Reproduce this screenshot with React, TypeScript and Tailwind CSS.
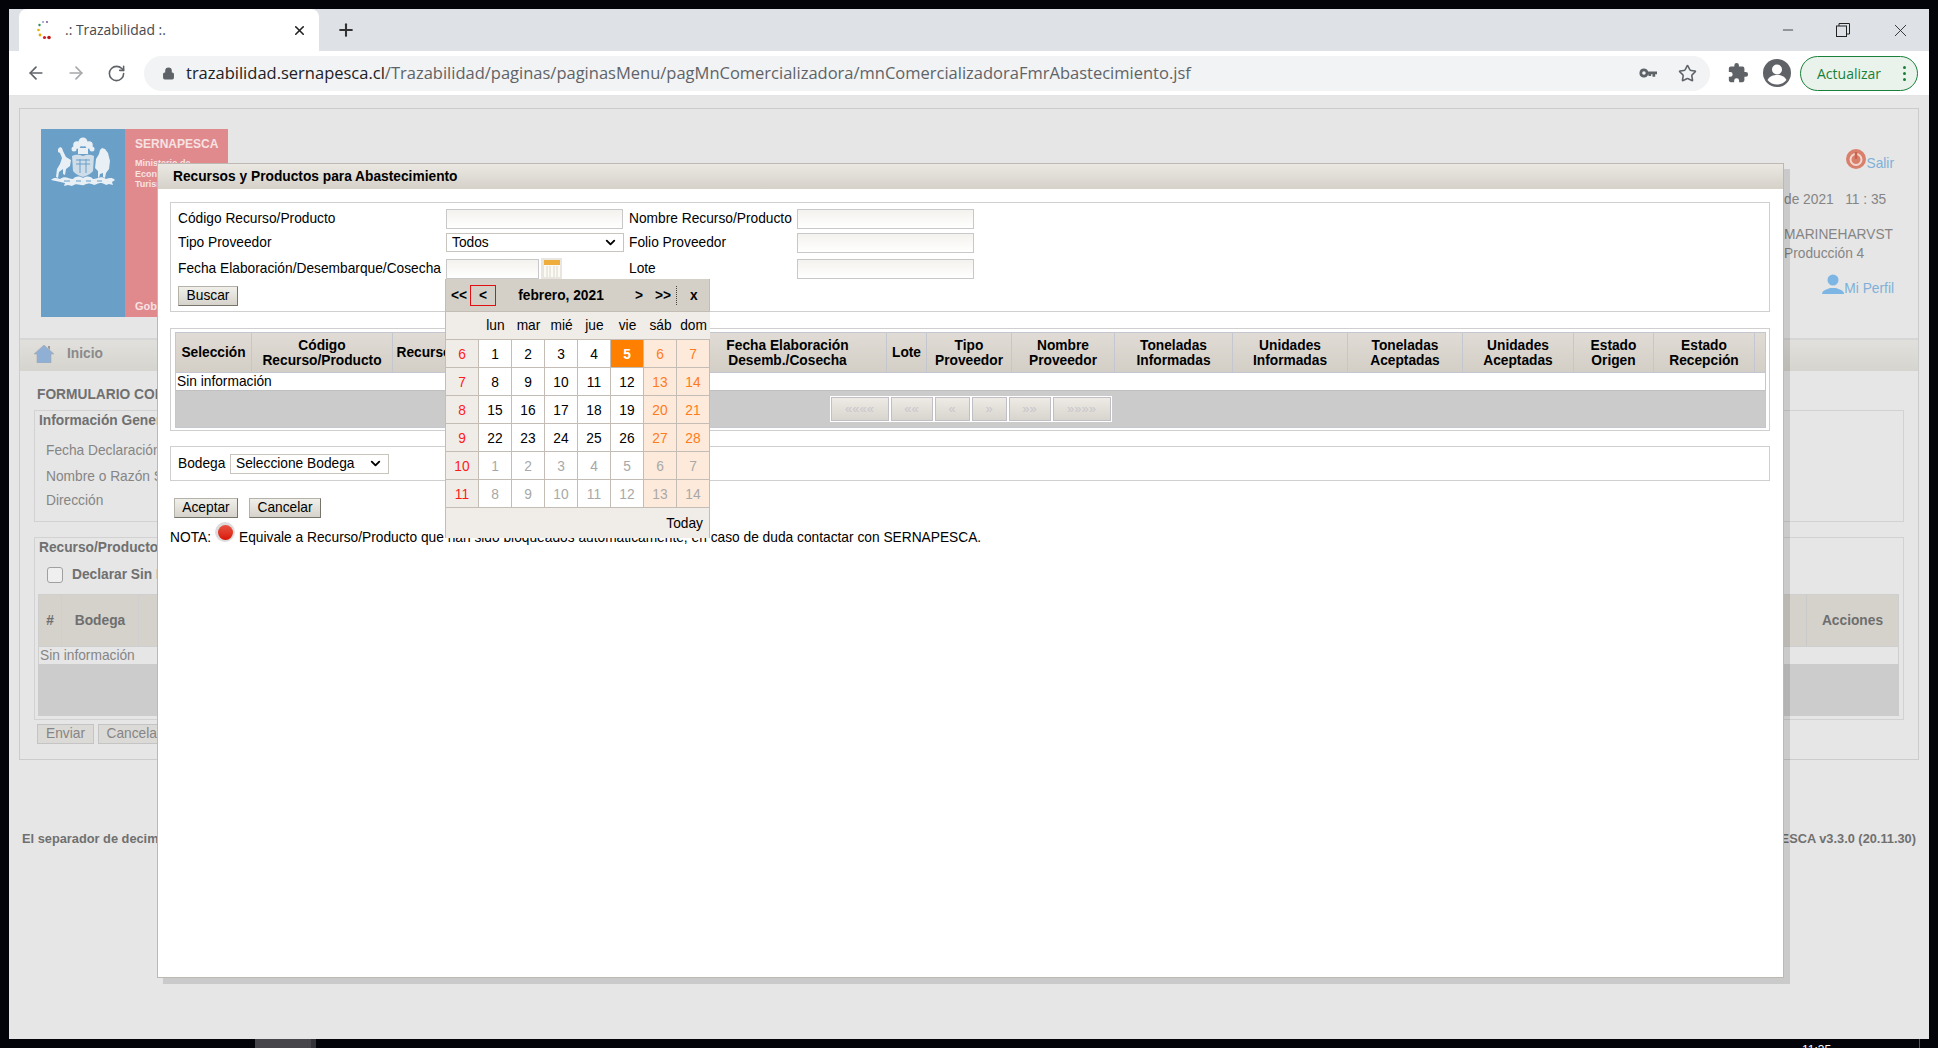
import React from 'react';
import { ArrowLeft, ArrowRight, RotateCw, Lock, Star, Minus, X, Plus, ChevronDown } from 'lucide-react';

const Emblem = () => (
  <svg viewBox="0 0 66 50" className="h-[50px] w-[66px]" fill="#e8eff5">
    <circle cx="33" cy="5" r="4.500" />
    <circle cx="27" cy="8" r="3.800" />
    <circle cx="39" cy="8" r="3.800" />
    <circle cx="24" cy="12" r="2.500" />
    <circle cx="42" cy="12" r="2.500" />
    <path d="M28 11h10v6H28z" />
    <path d="M22 19c4-2 8-1 11 0 3-1 7-2 11 0l-1 15c-2 3-7 5-10 6-3-1-8-3-10-6z" fill="#cfdde9" />
    <path d="M26 23h14M26 27h14M30 22v14M36 22v14" stroke="#6a9fc7" strokeWidth="1" fill="none" />
    <path d="M8 12l2-2 2 1 1 3 3 6 5 3-1 6-4 3-1 6-2-1v-5l-4 3-1 6-2-1 1-8 3-5 2-6-2-5-2-1z" />
    <path d="M52 11l3 1 3 4 2 8-1 8-3 4-1 5-2-1v-4l-3 1-1 4-1-1v-6l-3-3 1-9 3-5 1-4z" />
    <path d="M1 43c3-3 6-2 9-1 5-4 9 0 13 0 3-3 6-3 10-1 4-2 7-2 10 1 4 0 8-4 13 0 3-1 6-2 9 1l-3 2 1 3-4-1-3 1c-6-4-8-1-12 0-4-2-7-2-10 0-4 1-7-3-12 1l-4-1-4 1 1-3z" />
    <path d="M14 44h6M26 44h5M36 44h5M47 44h5" stroke="#6a9fc7" strokeWidth="1" fill="none" />
  </svg>
);

const Favicon = () => (
  <svg viewBox="0 0 14 20" className="h-[20px] w-[14px]">
    <circle cx="10" cy="2" r="1" fill="#7b4fa0" />
    <circle cx="6" cy="2" r="1" fill="#8aa0c0" />
    <circle cx="2.500" cy="5" r="1.200" fill="#2e8b57" />
    <circle cx="1.500" cy="10" r="1.300" fill="#e0b400" />
    <circle cx="3" cy="15" r="1.400" fill="#f0a000" />
    <circle cx="7.500" cy="17.500" r="1.600" fill="#d02020" />
    <circle cx="12" cy="17.500" r="1.800" fill="#c01818" />
  </svg>
);

const KeyIcon = () => (
  <svg viewBox="0 0 20 12" className="h-[12px] w-[18px]" fill="#5f6368">
    <path d="M5.500 1a5 5 0 0 1 4.700 3.300H20v3h-2v3h-3v-3h-1.500v2h-3V7.700H10.200A5 5 0 1 1 5.500 1zm0 3a2 2 0 1 0 0 4 2 2 0 0 0 0-4z" />
  </svg>
);

const PuzzleIcon = () => (
  <svg viewBox="0 0 24 24" className="h-[22px] w-[22px]" fill="#5f6368">
    <path d="M20.500 11H19V7a2 2 0 0 0-2-2h-4V3.500a2.500 2.500 0 0 0-5 0V5H4a2 2 0 0 0-2 2v3.800h1.500a2.700 2.700 0 0 1 0 5.400H2V20a2 2 0 0 0 2 2h3.800v-1.500a2.700 2.700 0 0 1 5.400 0V22H17a2 2 0 0 0 2-2v-4h1.500a2.500 2.500 0 0 0 0-5z" />
  </svg>
);

const ProfileIcon = () => (
  <svg viewBox="0 0 28 28" className="h-[28px] w-[28px]">
    <circle cx="14" cy="14" r="14" fill="#5f6368" />
    <circle cx="14" cy="10.500" r="5" fill="#fff" />
    <path d="M4.500 21c2-4 6-5 9.500-5s7.500 1 9.500 5c-2.500 3-6 4.500-9.500 4.500S7 24 4.500 21z" fill="#fff" />
  </svg>
);

const HomeIcon = () => (
  <svg viewBox="0 0 20 18" className="h-[18px] w-[20px]">
    <path d="M10 0 20 9h-3v9H3V9H0z" fill="#8fb0d4" stroke="#a9a9a9" strokeWidth="0.600" />
    <path d="M14 1h2v4l-2-2z" fill="#9a9a9a" />
  </svg>
);

const PowerIcon = () => (
  <svg viewBox="0 0 20 20" className="h-[20px] w-[20px]">
    <circle cx="10" cy="10" r="10" fill="#d9806c" />
    <circle cx="10" cy="10.500" r="5.500" fill="none" stroke="#f3d8d0" strokeWidth="2" />
    <rect x="8.800" y="3" width="2.400" height="7" fill="#c9634f" />
  </svg>
);

const UserIcon = () => (
  <svg viewBox="0 0 22 20" className="h-[20px] w-[22px]" fill="#7db6e4">
    <circle cx="11" cy="6" r="5.500" />
    <path d="M0 20c0-2 1-3 3-4l5-2h6l5 2c2 1 3 2 3 4z" />
  </svg>
);

const CalendarIcon = () => (
  <div className="flex h-[21px] w-[21px] items-center justify-center bg-[#e9e6e0]">
    <svg viewBox="0 0 16 17" className="h-[17px] w-[16px]">
      <rect width="16" height="5" fill="#efae3c" />
      <rect y="5" width="16" height="12" fill="#fbfaf4" />
      <path d="M3 6v11M6 6v11M10 6v11M13 6v11" stroke="#dcd8c8" strokeWidth="1" />
    </svg>
  </div>
);

const inputClass = 'h-[20px] border border-[#c8c8c8] bg-gradient-to-b from-[#f4f2ee] to-white';
const selectBox = 'flex items-center justify-between border border-[#c8c5be] bg-white px-[5px]';
const btnClass =
  'flex items-center justify-center border border-[#b5b2aa] border-r-[#77746c] border-b-[#77746c] bg-gradient-to-b from-[#f1efea] to-[#d6d3cb]';

const mainCols = [
  { cls: 'w-[76px]', label: ['Selección'] },
  { cls: 'w-[141px]', label: ['Código', 'Recurso/Producto'] },
  { cls: 'w-[63px]', label: ['Recurso'] },
  { cls: 'w-[233px]', label: [] },
  { cls: 'w-[198px]', label: ['Fecha Elaboración', 'Desemb./Cosecha'] },
  { cls: 'w-[40px]', label: ['Lote'] },
  { cls: 'w-[85px]', label: ['Tipo', 'Proveedor'] },
  { cls: 'w-[103px]', label: ['Nombre', 'Proveedor'] },
  { cls: 'w-[118px]', label: ['Toneladas', 'Informadas'] },
  { cls: 'w-[115px]', label: ['Unidades', 'Informadas'] },
  { cls: 'w-[115px]', label: ['Toneladas', 'Aceptadas'] },
  { cls: 'w-[111px]', label: ['Unidades', 'Aceptadas'] },
  { cls: 'w-[80px]', label: ['Estado', 'Origen'] },
  { cls: 'w-[101px]', label: ['Estado', 'Recepción'] },
  { cls: 'w-[11px]', label: [] },
];

const pagerButtons = [
  { cls: 'w-[58px]', label: '««««' },
  { cls: 'w-[42px]', label: '««' },
  { cls: 'w-[35px]', label: '«' },
  { cls: 'w-[35px]', label: '»' },
  { cls: 'w-[42px]', label: '»»' },
  { cls: 'w-[58px]', label: '»»»»' },
];

const calendarWeeks = [
  { week: 6, days: [1, 2, 3, 4, 5, 6, 7], muted: false },
  { week: 7, days: [8, 9, 10, 11, 12, 13, 14], muted: false },
  { week: 8, days: [15, 16, 17, 18, 19, 20, 21], muted: false },
  { week: 9, days: [22, 23, 24, 25, 26, 27, 28], muted: false },
  { week: 10, days: [1, 2, 3, 4, 5, 6, 7], muted: true },
  { week: 11, days: [8, 9, 10, 11, 12, 13, 14], muted: true },
];

const cellBase = 'flex h-[28px] items-center justify-center border-r border-b border-[#c4bdb5] pt-[3px]';

const Calendar = () => (
  <div className="absolute left-[287px] top-[115px] w-[265px] border-l border-[#c4bdb5] bg-[#f0ede8] text-black">
    <div className="flex h-[33px] items-center border-r border-b border-[#c4bdb5] bg-[#d4d0c8] font-bold">
      <span className="ml-[5px] w-[19px] pt-[2px]">&lt;&lt;</span>
      <span className="flex h-[21px] w-[26px] items-center justify-center border border-[#e01010] pt-[2px]">&lt;</span>
      <span className="w-[130px] pt-[2px] text-center">febrero, 2021</span>
      <span className="w-[26px] pt-[2px] text-center">&gt;</span>
      <span className="w-[22px] pt-[2px] text-center">&gt;&gt;</span>
      <span className="ml-[2px] h-[19px] border-l border-dotted border-[#444]" />
      <span className="ml-[13px] pt-[2px]">x</span>
    </div>
    <div className="grid h-[28px] grid-cols-[repeat(8,33px)] items-center border-b border-[#c4bdb5] pt-[1px]">
      {['', 'lun', 'mar', 'mié', 'jue', 'vie', 'sáb', 'dom'].map((d, i) => (
        <span key={i} className="text-center">{d}</span>
      ))}
    </div>
    {calendarWeeks.map((row) => (
      <div key={row.week} className="grid grid-cols-[repeat(8,33px)]">
        <span className={`${cellBase} text-[#ff1a1a]`}>{row.week}</span>
        {row.days.map((d, i) => {
          const weekend = i > 4;
          if (!row.muted && d === 5) {
            return <span key={i} className={`${cellBase} bg-[#ff8000] font-bold text-white`}>{d}</span>;
          }
          if (weekend) {
            return (
              <span key={i} className={`${cellBase} bg-[#feeadb] ${row.muted ? 'text-[#a8a8a8]' : 'text-[#ff7b1a]'}`}>{d}</span>
            );
          }
          return (
            <span key={i} className={`${cellBase} bg-white ${row.muted ? 'text-[#a8a8a8]' : 'text-black'}`}>{d}</span>
          );
        })}
      </div>
    ))}
    <div className="flex h-[30px] items-center justify-end border-r border-[#c4bdb5] pr-[6px] pt-[1px]">Today</div>
  </div>
);

const Modal = () => (
  <div className="absolute left-[157px] top-[163px] h-[815px] w-[1627px] border border-[#bdb9b2] bg-white text-[13.75px] leading-[16px] text-black shadow-[6px_6px_0_rgba(0,0,0,0.12)]">
    <div className="flex h-[25px] items-center bg-gradient-to-b from-[#ebe8e3] to-[#d5d1c9] pl-[15px] font-bold">
      Recursos y Productos para Abastecimiento
    </div>

    <div className="px-[12px]">
      <div className="mt-[13px] h-[110px] w-[1600px] border border-[#cfcfcf] pl-[7px] pt-[6px]">
        <div className="flex h-[20px] items-center">
          <span className="w-[268px]">Código Recurso/Producto</span>
          <div className={`${inputClass} w-[177px]`} />
          <span className="ml-[6px] w-[168px]">Nombre Recurso/Producto</span>
          <div className={`${inputClass} w-[177px]`} />
        </div>
        <div className="mt-[4px] flex h-[19px] items-center">
          <span className="w-[268px]">Tipo Proveedor</span>
          <div className={`${selectBox} h-[19px] w-[178px]`}>
            Todos
            <ChevronDown size={15} strokeWidth={3} />
          </div>
          <span className="ml-[5px] w-[168px]">Folio Proveedor</span>
          <div className={`${inputClass} w-[177px]`} />
        </div>
        <div className="mt-[6px] flex h-[21px] items-center">
          <span className="w-[268px]">Fecha Elaboración/Desembarque/Cosecha</span>
          <div className={`${inputClass} w-[93px]`} />
          <div className="ml-[2px]"><CalendarIcon /></div>
          <span className="ml-[67px] w-[168px]">Lote</span>
          <div className={`${inputClass} w-[177px]`} />
        </div>
        <div className={`${btnClass} mt-[7px] h-[20px] w-[60px]`}>Buscar</div>
      </div>

      <div className="mt-[16px] h-[103px] w-[1600px] border border-[#cfcfcf] pl-[4px] pt-[3px]">
        <div className="w-[1591px] border border-[#c5c7d0]">
          <div className="flex h-[40px] border-b border-[#c5c7d0] bg-gradient-to-b from-[#e0dcd5] to-[#d3cfc7] font-bold">
            {mainCols.map((col, i) => (
              <div key={i} className={`${col.cls} flex shrink-0 flex-col items-center justify-center whitespace-nowrap border-r border-[#c5c7d0] leading-[15px]`}>
                {col.label.map((line) => (
                  <span key={line}>{line}</span>
                ))}
              </div>
            ))}
          </div>
          <div className="flex h-[18px] items-center border-b border-[#c0c0c0] pl-[1px]">Sin información</div>
          <div className="flex h-[36px] items-center justify-center bg-[#cbcbcb]">
            <div className="flex gap-[2px] border border-white bg-white">
              {pagerButtons.map((b) => (
                <div key={b.label} className={`${b.cls} flex h-[24px] items-center justify-center border border-[#c2bec6] bg-gradient-to-b from-[#eeebe6] to-[#d8d5ce] text-[13px] text-[#c9c6cc]`}>
                  {b.label}
                </div>
              ))}
            </div>
          </div>
        </div>
      </div>

      <div className="mt-[15px] flex h-[35px] w-[1600px] items-center border border-[#cfcfcf] pl-[7px]">
        <span className="w-[52px]">Bodega</span>
        <div className={`${selectBox} h-[20px] w-[159px]`}>
          Seleccione Bodega
          <ChevronDown size={15} strokeWidth={3} />
        </div>
      </div>

      <div className="mt-[17px] flex pl-[4px]">
        <div className={`${btnClass} h-[20px] w-[64px]`}>Aceptar</div>
        <div className={`${btnClass} ml-[11px] h-[20px] w-[72px]`}>Cancelar</div>
      </div>

      <div className="mt-[4px] flex h-[20px] items-center">
        <span className="mt-[12px]">NOTA:</span>
        <span className="ml-[4px] flex h-[20px] w-[20px] items-center justify-center rounded-full bg-[#dcdcdc]">
          <span className="h-[15px] w-[15px] rounded-full bg-gradient-to-b from-[#e85040] to-[#d81000]" />
        </span>
        <span className="ml-[4px] mt-[12px]">
          Equivale a Recurso/Producto que han sido bloqueados automáticamente, en caso de duda contactar con SERNAPESCA.
        </span>
      </div>
    </div>

    <Calendar />
  </div>
);

const BackgroundPage = () => (
  <div className="h-[943px] bg-[#e6e6e6] px-[10px] pt-[12px] text-[13.75px] leading-[16px] text-[#858585]">
    <div className="h-[652px] border border-[#cccccc]">
      <div className="flex h-[229px] justify-between pl-[21px] pt-[20px]">
        <div className="flex h-[188px] w-[187px]">
          <div className="flex w-[84px] justify-center bg-[#6a9fc7] pt-[8px]">
            <div className="h-[50px]"><Emblem /></div>
          </div>
          <div className="flex w-[103px] flex-col bg-[#e08a8e] pl-[10px] pt-[7px] text-[#f7e2e2]">
            <span className="text-[12px] font-bold">SERNAPESCA</span>
            <span className="mt-[6px] text-[9px] font-bold leading-[10.5px]">Ministerio de</span>
            <span className="text-[9px] font-bold leading-[10.5px]">Economía, Fomento</span>
            <span className="text-[9px] font-bold leading-[10.5px]">Turismo</span>
            <span className="mt-auto mb-[3px] whitespace-nowrap text-[11px] font-bold">Gobierno de Chile</span>
          </div>
        </div>
        <div className="w-[134px] pr-[24px] pt-[20px]">
          <div className="flex items-end justify-end">
            <PowerIcon />
            <span className="translate-y-[3px] text-[#7fb0d8]">Salir</span>
          </div>
          <div className="mt-[23px] whitespace-nowrap">de 2021 &nbsp; 11 : 35</div>
          <div className="mt-[17px] leading-[19px]">
            <div>MARINEHARVST</div>
            <div>Producción 4</div>
          </div>
          <div className="mt-[11px] flex items-end justify-end">
            <UserIcon />
            <span className="translate-y-[3px] text-[#7fb0d8]">Mi Perfil</span>
          </div>
        </div>
      </div>

      <div className="flex h-[33px] items-center border-t-2 border-[#d6d6d6] bg-gradient-to-b from-[#e2e0dc] to-[#d6d4ce] pb-[3px] pl-[14px]">
        <HomeIcon />
        <span className="ml-[13px] font-bold text-[#8a8a8a]">Inicio</span>
      </div>

      <div className="px-[14px]">
        <div className="mt-[16px] pl-[3px] font-bold text-[#707070]">FORMULARIO COMERCIALIZADORA</div>

        <div className="mt-[7px] h-[112px] border border-[#d2d2d2] pl-[4px] pt-[2px]">
          <div className="font-bold text-[#707070]">Información General</div>
          <div className="mt-[14px] pl-[7px]">Fecha Declaración</div>
          <div className="mt-[10px] pl-[7px]">Nombre o Razón Social</div>
          <div className="mt-[8px] pl-[7px]">Dirección</div>
        </div>

        <div className="mt-[15px] h-[183px] w-[1870px] border border-[#d2d2d2] pl-[3px] pt-[2px]">
          <div className="pl-[1px] font-bold text-[#707070]">Recurso/Producto</div>
          <div className="mt-[11px] flex h-[16px] items-center pl-[9px]">
            <span className="h-[16px] w-[16px] rounded-[3px] border border-[#a0a0a0] bg-[#efefef]" />
            <span className="ml-[9px] font-bold text-[#707070]">Declarar Sin Movimiento</span>
          </div>
          <div className="mt-[11px] w-[1861px]">
            <div className="flex h-[53px] border border-[#cfcfcf] bg-[#d5d2cc] font-bold text-[#6e6e6e]">
              <div className="flex w-[23px] items-center justify-center border-r border-[#cfcfcf]">#</div>
              <div className="flex w-[77px] items-center justify-center border-r border-[#cfcfcf]">Bodega</div>
              <div className="flex-1" />
              <div className="flex w-[92px] items-center justify-center border-l border-[#c9c9c9]">Acciones</div>
            </div>
            <div className="flex h-[17px] items-center border-x border-[#cfcfcf] pl-[1px]">Sin información</div>
            <div className="h-[52px] bg-[#cccccc]" />
          </div>
        </div>

        <div className="mt-[4px] flex gap-[4px] pl-[3px]">
          <div className="flex h-[20px] w-[57px] items-center justify-center border border-[#c4c4c4] bg-[#dcdad6]">Enviar</div>
          <div className="flex h-[20px] w-[72px] items-center justify-center border border-[#c4c4c4] bg-[#dcdad6]">Cancelar</div>
        </div>
      </div>
    </div>

    <div className="mt-[71px] flex justify-between px-[3px] text-[12.8px] font-bold text-[#707070]">
      <span>El separador de decimales</span>
      <span>SERNAPESCA v3.3.0 (20.11.30)</span>
    </div>
  </div>
);

const BrowserChrome = () => (
  <>
    <div className="flex h-[42px] items-center bg-[#dee1e6] text-[#3c4043]">
      <div className="ml-[10px] flex h-[42px] w-[300px] items-center rounded-t-[8px] bg-white pl-[18px]">
        <Favicon />
        <span className="ml-[14px] font-['Open_Sans',sans-serif] text-[13.9px] text-[#45494e]">.: Trazabilidad :.</span>
        <X size={15} strokeWidth={2.500} className="ml-[126px] text-[#222]" />
      </div>
      <Plus size={20} strokeWidth={2.500} className="ml-[17px] text-[#333]" />
      <div className="ml-auto flex items-center pr-[18px] text-[#222]">
        <Minus size={16} strokeWidth={1.200} />
        <svg viewBox="0 0 14 14" className="ml-[40px] h-[14px] w-[14px]" fill="none" stroke="#222" strokeWidth="1">
          <rect x="0.500" y="3" width="10" height="10.500" />
          <path d="M3 3V.500h10.500V11H10.500" />
        </svg>
        <X size={21} strokeWidth={1} className="ml-[40px]" />
      </div>
    </div>

    <div className="flex h-[45px] items-center border-b border-[#e3e4e6] bg-white">
      <ArrowLeft size={20} strokeWidth={2} className="ml-[17px] text-[#5f6368]" />
      <ArrowRight size={20} strokeWidth={2} className="ml-[20px] text-[#a6a8ab]" />
      <RotateCw size={19} strokeWidth={2} className="ml-[21px] text-[#5f6368]" />
      <div className="ml-[18px] flex h-[35px] w-[1566px] items-center rounded-full bg-[#f1f3f4] pl-[18px] pr-[13px]">
        <Lock size={13} fill="#5f6368" stroke="#5f6368" />
        <span className="ml-[11px] pt-[1px] font-['Open_Sans',sans-serif] text-[16.5px] whitespace-nowrap text-[#5f6368]">
          <span className="text-[#202124]">trazabilidad.sernapesca.cl</span>
          /Trazabilidad/paginas/paginasMenu/pagMnComercializadora/mnComercializadoraFmrAbastecimiento.jsf
        </span>
        <div className="ml-auto flex items-center gap-[21px]">
          <KeyIcon />
          <Star size={19} strokeWidth={2} className="text-[#5f6368]" />
        </div>
      </div>
      <div className="ml-[17px]"><PuzzleIcon /></div>
      <div className="ml-[14px]"><ProfileIcon /></div>
      <div className="ml-[9px] flex h-[35px] w-[118px] items-center justify-between rounded-full border border-[#188038] bg-[#e9f3ec] pl-[16px] pr-[11px] font-['Open_Sans',sans-serif] text-[14px] text-[#188038]">
        Actualizar
        <span className="flex flex-col gap-[3px]">
          <span className="h-[3px] w-[3px] rounded-full bg-[#188038]" />
          <span className="h-[3px] w-[3px] rounded-full bg-[#188038]" />
          <span className="h-[3px] w-[3px] rounded-full bg-[#188038]" />
        </span>
      </div>
    </div>
  </>
);

export default function App() {
  return (
    <div className="relative h-[1048px] w-[1938px] overflow-hidden bg-[#02040a] pt-[9px] font-['Liberation_Sans',Arial,sans-serif]">
      <div className="mx-[9px] h-[1030px] overflow-hidden">
        <BrowserChrome />
        <BackgroundPage />
      </div>

      <div className="flex h-[9px] overflow-hidden text-[12px] text-white">
        <div className="ml-[255px] h-[9px] w-[56px] bg-[#46464a]" />
        <div className="h-[9px] w-[5px] bg-[#333338]" />
        <span className="ml-[1486px] pt-[4px] leading-[15px]">11:35</span>
        <div className="ml-[88px] h-[9px] border-l border-[#555]" />
      </div>

      <Modal />
    </div>
  );
}
